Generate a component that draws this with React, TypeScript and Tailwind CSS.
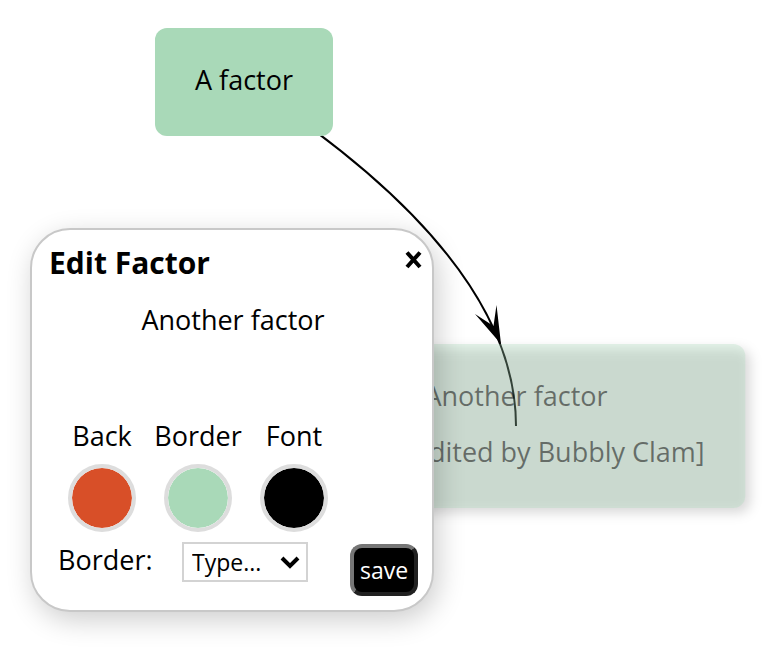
import { useState } from "react";
import type { ReactNode } from "react";

type Swatch = { id: string; label: string; value: string };

const swatches: Swatch[] = [
  { id: "back", label: "Back", value: "#d84f28" },
  { id: "border", label: "Border", value: "#a9d9b8" },
  { id: "font", label: "Font", value: "#000000" },
];

function Factor({ children }: { children: ReactNode }) {
  return (
    <div className="absolute top-[28px] left-[244px] -translate-x-1/2 rounded-xl bg-[#a9d9b8] px-10 pt-[38px] pb-[42px] text-center text-[27px] leading-[28px] whitespace-nowrap">
      {children}
    </div>
  );
}

/* The factor being edited is faded; its shadow shows through the fill. */
function FadedFactor({ lines }: { lines: string[] }) {
  return (
    <div className="absolute top-[344px] left-[516px] -translate-x-1/2">
      <div className="absolute inset-0 translate-x-[5px] translate-y-[5px] rounded-xl bg-black/15 blur-[6px]" />
      <div className="relative rounded-xl bg-[#a9d9b8]/30 px-[41px] pt-[38px] pb-[42px] text-center text-[27px] leading-[28px] whitespace-nowrap text-black/50">
        {lines.map((line) => (
          <p key={line} className="not-first:mt-7">
            {line}
          </p>
        ))}
      </div>
    </div>
  );
}

function Link() {
  return (
    <svg className="absolute top-0 left-0" width="600" height="480" aria-hidden="true">
      <path d="M244 82 Q516 257 516 426" fill="none" stroke="#000" strokeWidth="2" />
      <path d="M501 344 L475 314 L493.500 326 L496.500 305 Z" fill="#000" />
    </svg>
  );
}

function EditDialog() {
  const [name, setName] = useState("Another factor");
  const [colors, setColors] = useState(swatches);

  return (
    <form
      role="dialog"
      aria-labelledby="title"
      onSubmit={(e) => e.preventDefault()}
      className="absolute top-[228px] left-[30px] flex w-[404px] flex-col rounded-[40px] border-2 border-[#c8c8c8] bg-white pt-[10px] pr-[14px] pb-[14px] pl-4 shadow-[4px_8px_28px_rgba(0,0,0,0.2)]"
    >
      <header className="flex items-start justify-between">
        <h1 id="title" className="pl-px text-[30px] leading-[46px] font-bold">
          Edit Factor
        </h1>
        <button type="button" aria-label="Close" className="-mr-2 flex h-10 w-6 items-center justify-center">
          <svg width="18" height="18" viewBox="0 0 18 18" aria-hidden="true">
            <path d="M2 1.500 L15 16 M15 1.500 L2 16" stroke="#000" strokeWidth="4" />
          </svg>
        </button>
      </header>

      <textarea
        aria-label="Factor name"
        value={name}
        onChange={(e) => setName(e.target.value)}
        className="mt-[14px] h-[116px] w-full resize-none text-center text-[27px] leading-[40px] outline-none"
      />

      <div className="ml-1.5 flex">
        {colors.map((c) => (
          <div key={c.id} className="flex w-24 flex-col items-center gap-2">
            <label htmlFor={c.id} className="text-[27px] leading-[40px]">
              {c.label}
            </label>
            <input
              id={c.id}
              type="color"
              value={c.value}
              onChange={(e) =>
                setColors(colors.map((o) => (o.id === c.id ? { ...o, value: e.target.value } : o)))
              }
              className="size-[68px] appearance-none rounded-full border-4 border-[#dddddd] bg-transparent p-0 [&::-webkit-color-swatch]:rounded-full [&::-webkit-color-swatch]:border-0 [&::-webkit-color-swatch-wrapper]:p-0"
            />
          </div>
        ))}
      </div>

      <div className="mt-[10px] flex items-start pl-2">
        <label htmlFor="type" className="w-[126px] pl-0.5 text-[27px] leading-[36px]">
          Border:
        </label>
        <div className="relative">
          <select
            id="type"
            className="block h-10 w-[126px] appearance-none border-2 border-[#d3d3d3] bg-white pl-2 text-[23px] leading-[36px]"
          >
            <option>Type...</option>
            <option>Solid</option>
            <option>Dashed</option>
            <option>Dotted</option>
            <option>None</option>
          </select>
          <svg
            className="pointer-events-none absolute top-3 right-2"
            width="20"
            height="16"
            viewBox="0 0 20 16"
            aria-hidden="true"
          >
            <path d="M2 4 L10 12 L18 4" fill="none" stroke="#000" strokeWidth="4" />
          </svg>
        </div>
        <button
          type="submit"
          className="mt-0.5 ml-auto h-[52px] w-[68px] rounded-xl border-4 border-t-[#767676] border-r-[#212121] border-b-[#212121] border-l-[#767676] bg-black text-[23px] leading-[44px] text-white"
        >
          save
        </button>
      </div>
    </form>
  );
}

export default function App() {
  return (
    <main className="relative min-h-screen overflow-hidden bg-white font-['Open_Sans',sans-serif] font-[450] text-black">
      <Link />
      <Factor>A factor</Factor>
      <FadedFactor lines={["Another factor", "[Being edited by Bubbly Clam]"]} />
      <EditDialog />
    </main>
  );
}
